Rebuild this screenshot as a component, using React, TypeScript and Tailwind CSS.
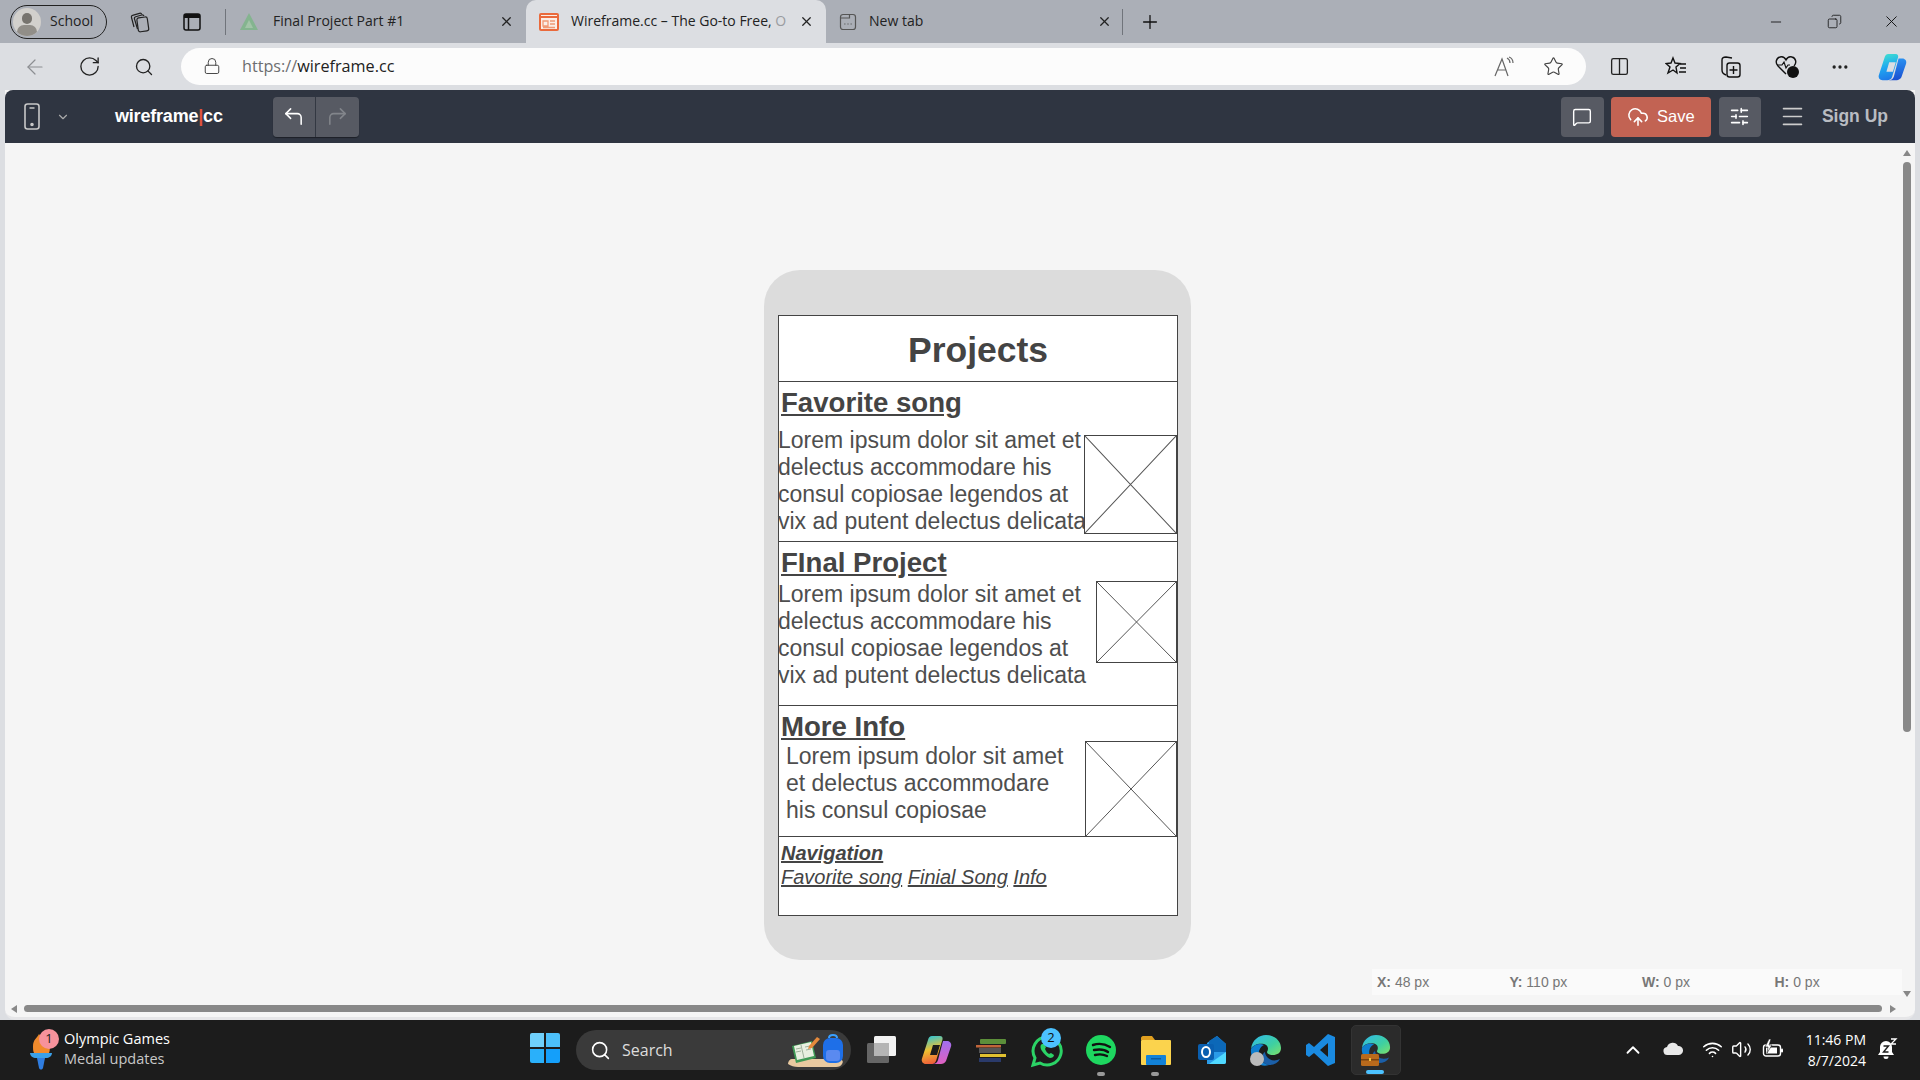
import React from "react";
import { ArrowLeft, RotateCw, Search, Lock, X, Plus, Minus, Star, Ellipsis, ChevronDown, ChevronUp, CornerUpLeft, CornerUpRight, MessageSquare, CloudUpload, SlidersHorizontal, Menu, Wifi, Volume2, Columns2, Copy } from "lucide-react";

const sans = "font-['Liberation_Sans',Arial,sans-serif]";
const ui = "font-['Open_Sans','Noto_Sans',sans-serif]";

function Tab({ active, title, icon, width, pr, gap, fade }: { active?: boolean; title: string; icon: React.ReactNode; width: string; pr: string; gap: string; fade?: string }) {
  return (
    <div className={`${width} ${pr} h-[43px] flex items-center pl-[13px] shrink-0 ${active ? "bg-[#dcdee2] rounded-t-[10px]" : ""}`}>
      <div className="w-[24px] h-[20px] flex items-center shrink-0">{icon}</div>
      <div className={`${gap} flex-1 pb-[2px] whitespace-pre text-[14px] text-[#222]`}>{title}{fade && <span className="text-[#9a9ca0]">{fade}</span>}</div>
      <X size={15} strokeWidth={2} className="text-[#222] shrink-0" />
    </div>
  );
}

function Cross({ className }: { className: string }) {
  return (
    <div className={`${className} border border-[#444] shrink-0 bg-white`}>
      <svg viewBox="0 0 100 100" preserveAspectRatio="none" className="w-full h-full block">
        <path d="M0 0L100 100M100 0L0 100" stroke="#555" strokeWidth="1" vectorEffect="non-scaling-stroke" fill="none" />
      </svg>
    </div>
  );
}

function Body({ children, className = "" }: { children: React.ReactNode; className?: string }) {
  return <div className={`w-[290px] text-[23px] leading-[27px] text-[#4e4e4e] whitespace-pre ${className}`}>{children}</div>;
}

function Heading({ children, className = "" }: { children: React.ReactNode; className?: string }) {
  return <div className={`text-[27.6px] leading-[34px] font-bold underline text-[#444] pl-[2px] ${className}`}>{children}</div>;
}

function Toolbar() {
  return (
    <div className="h-[53px] shrink-0 bg-[#2f3541] rounded-t-[8px] flex items-center pl-[19px] pr-[27px]">
      <svg width="16" height="27" viewBox="0 0 16 27" fill="none" stroke="#c8c8c8" strokeWidth="1.600">
        <rect x="1" y="1" width="14" height="25" rx="2.500" />
        <path d="M5.500 5h5" />
        <circle cx="8" cy="21.500" r="1" fill="#c8c8c8" />
      </svg>
      <ChevronDown size={14} className="text-[#aaa] ml-[16px]" />
      <div className={`${sans} ml-[45px] text-[18px] font-bold text-white tracking-[-0.2px]`}>wireframe<span className="text-[#e0533d]">|</span>cc</div>
      <div className="ml-[50px] flex h-[40px] rounded-[4px] overflow-hidden shadow-[0_1px_1px_rgba(0,0,0,0.4)]">
        <div className="w-[43px] bg-[#575a63] flex items-center justify-center border-r border-[#333842]"><CornerUpLeft size={23} strokeWidth={1.6} className="text-white" /></div>
        <div className="w-[43px] bg-[#575a63] flex items-center justify-center"><CornerUpRight size={23} strokeWidth={1.6} className="text-[#82858b]" /></div>
      </div>
      <div className="flex-1" />
      <div className="w-[43px] h-[40px] rounded-[4px] bg-[#575a63] flex items-center justify-center"><MessageSquare size={20} strokeWidth={1.7} className="text-white" /></div>
      <div className={`${sans} ml-[7px] w-[100px] h-[40px] rounded-[4px] bg-[#c26353] flex items-center justify-center gap-[8px] text-white text-[16.5px]`}><CloudUpload size={22} strokeWidth={1.7} />Save</div>
      <div className="ml-[8px] w-[42px] h-[40px] rounded-[4px] bg-[#575a63] flex items-center justify-center"><SlidersHorizontal size={21} strokeWidth={1.8} className="text-white" /></div>
      <Menu size={27} strokeWidth={1.4} className="text-[#ccc] ml-[18px]" />
      <div className={`${sans} ml-[16px] text-[17.5px] font-bold text-[#b9bcc2]`}>Sign Up</div>
    </div>
  );
}

function Wireframe() {
  return (
    <div className={`${sans} w-[427px] h-[690px] rounded-[36px] bg-[#dcdcdc] pt-[45px] px-[14px]`}>
      <div className="w-[400px] h-[601px] border border-[#444] bg-white flex flex-col">
        <div className="h-[66px] shrink-0 border-b border-[#444] flex items-center justify-center pt-[5px] text-[35.5px] font-bold text-[#444]">Projects</div>
        <div className="h-[160px] shrink-0 border-b border-[#444] flex flex-col pt-[4px]">
          <Heading>Favorite song</Heading>
          <div className="flex justify-between mt-[5px]">
            <Body className="mt-[2px] -ml-[1px]">{"Lorem ipsum dolor sit amet et\ndelectus accommodare his\nconsul copiosae legendos at\nvix ad putent delectus delicata"}</Body>
            <Cross className="w-[93px] h-[99px] mt-[10px]" />
          </div>
        </div>
        <div className="h-[164px] shrink-0 border-b border-[#444] flex flex-col pt-[4px]">
          <Heading>FInal Project</Heading>
          <div className="flex justify-between">
            <Body className="mt-[1px] -ml-[1px]">{"Lorem ipsum dolor sit amet et\ndelectus accommodare his\nconsul copiosae legendos at\nvix ad putent delectus delicata"}</Body>
            <Cross className="w-[81px] h-[82px] mt-[1px]" />
          </div>
        </div>
        <div className="h-[131px] shrink-0 border-b border-[#444] flex flex-col pt-[4px]">
          <Heading>More Info</Heading>
          <div className="flex justify-between">
            <Body className="pl-[7px] -mt-[1px]">{"Lorem ipsum dolor sit amet\net delectus accommodare\nhis consul copiosae"}</Body>
            <Cross className="w-[92px] h-[96px] -mt-[3px]" />
          </div>
        </div>
        <div className="flex-1 pl-[2px] pt-[4px] text-[#444] italic">
          <div className="text-[20px] leading-[24px] font-bold underline">Navigation</div>
          <div className="text-[20px] leading-[24px] whitespace-pre"><span className="underline">Favorite song</span> <span className="underline">Finial Song</span> <span className="underline">Info</span></div>
        </div>
      </div>
    </div>
  );
}

function Status() {
  return (
    <div className={`${sans} absolute right-[13px] bottom-[22px] w-[530px] h-[26px] bg-[#fafafa] flex items-center text-[14px] text-[#777]`}>
      <div className="w-[132.5px] pl-[5px]"><b>X:</b> 48 px</div>
      <div className="w-[132.5px] pl-[5px]"><b>Y:</b> 110 px</div>
      <div className="w-[132.5px] pl-[5px]"><b>W:</b> 0 px</div>
      <div className="pl-[5px]"><b>H:</b> 0 px</div>
    </div>
  );
}

function Edge({ size = 30, id }: { size?: number; id: string }) {
  return (
    <svg width={size} height={size} viewBox="0 0 32 32">
      <defs>
        <linearGradient id={id} x1="0" y1="0" x2="1" y2="1"><stop offset="0" stopColor="#2fb8ee" /><stop offset="0.6" stopColor="#3fd0a0" /><stop offset="1" stopColor="#7ee06a" /></linearGradient>
      </defs>
      <path d="M1 15C2 6 9 1 16 1c9 0 15 6 15 13 0 5-4 7-8 7-3 0-6-1-6-3 2-3 1-7-3-8-6-1-11 1-13 5z" fill={`url(#${id})`} />
      <path d="M1 15c3-5 9-6 13-4-4 2-6 6-5 11 1 4 5 8 10 9-3 1-6 1-8 0C5 29 0 22 1 15z" fill="#0f7fd0" />
      <path d="M19 31c5 0 9-2 11-6-4 2-9 2-12-1-2-2-3-4-3-6-2 1-4 5-2 9 1 2 3 4 6 4z" fill="#1b5fa8" />
    </svg>
  );
}

function Copilot({ id, w, h, rainbow }: { id: string; w: number; h: number; rainbow?: boolean }) {
  return (
    <svg width={w} height={h} viewBox="0 0 32 32">
      <defs>
        <linearGradient id={id} x1="0.3" y1="0" x2="0.5" y2="1">
          <stop offset="0" stopColor={rainbow ? "#2ec4d6" : "#3fe0d0"} />
          <stop offset="0.5" stopColor={rainbow ? "#f0c030" : "#1fa8f0"} />
          <stop offset="1" stopColor={rainbow ? "#ef5a3a" : "#1f78e8"} />
        </linearGradient>
        <linearGradient id={`${id}b`} x1="0.5" y1="0" x2="0.5" y2="1">
          <stop offset="0" stopColor={rainbow ? "#a070f0" : "#2a90f0"} />
          <stop offset="1" stopColor={rainbow ? "#e060c0" : "#1a4fd0"} />
        </linearGradient>
      </defs>
      <path d="M12 2h8c2 0 3 1.500 2.500 3.500L16 27c-1 2.500-3 3-5 3H6c-3 0-5-2.500-4-5.500L8 6c.6-2.500 2-4 4-4z" fill={`url(#${id})`} />
      <path d="M23 7h4c3 0 5 2.500 4 5.500L26 27c-1 2-3 3-5 3h-9c3 0 5-1 6-4z" fill={`url(#${id}b)`} />
      <path d="M13 11h7l-3 10h-7z" fill={rainbow ? "#1c1c1c" : "#dcdee2"} />
    </svg>
  );
}

function Taskbar() {
  return (
    <div className={`${ui} h-[60px] shrink-0 bg-[#1c1c1c] relative text-white`}>
      <div className="absolute left-[29px] top-[6px] w-[44px] h-[48px]">
        <svg width="24" height="44" viewBox="0 0 24 44" className="absolute left-0 top-[4px]">
          <path d="M10 4c-2 4-6 6-6 12 0 3 0 5 1 7h15c2-4 0-8-2-11-1 2-2 3-3 3 0-4-2-8-5-11z" fill="#f08a2c" />
          <path d="M1 23h22c0 3-3 5-6 5H7c-3 0-6-2-6-5z" fill="#3aa0e8" />
          <path d="M8 28h8l-2 10c-1 2-3 2-4 0z" fill="#2f7de0" />
        </svg>
        <div className="absolute left-[10px] top-[3px] w-[20px] h-[20px] rounded-full bg-[#f7929c] text-[#222] text-[13px] flex items-center justify-center">1</div>
      </div>
      <div className="absolute left-[64px] top-[9px] text-[14.5px] leading-[20px]">
        <div>Olympic Games</div>
        <div className="text-[#c8c8c8]">Medal updates</div>
      </div>
      <div className="absolute left-[530px] top-[13px] w-[30px] h-[30px] grid grid-cols-2 gap-[1.5px] rounded-[2px] overflow-hidden">
        <div className="bg-[#6fd0fb]" /><div className="bg-[#4cc0fa]" /><div className="bg-[#2ab0fa]" /><div className="bg-[#149ffa]" />
      </div>
      <div className="absolute left-[576px] top-[10px] w-[275px] h-[40px] rounded-[20px] bg-[#3a3a3a] flex items-center pl-[14px] text-[#ddd] text-[16px]">
        <Search size={21} strokeWidth={1.8} className="text-white" />
        <span className="ml-[11px]">Search</span>
        <svg width="62" height="36" viewBox="0 0 62 36" className="absolute right-[3px] top-[2px]">
          <path d="M6 27h46c4 0 6 2 4 5-1 2-3 3-6 3H12c-4 0-7-1-10-3 0-3 2-5 4-5z" fill="#e8c9a0" />
          <path d="M6 14l20-5 4 17-20 5z" fill="#3f9a55" />
          <path d="M8 14l17-4 3 14-17 4z" fill="#e8efe0" />
          <path d="M15 13l3 13M10 17l5-1M10 20l5-1M19 15l5-1M20 18l5-1" stroke="#8aa088" strokeWidth="0.800" />
          <path d="M23 14l8-9 3 2-8 9-4 1z" fill="#e58a3c" />
          <rect x="37" y="6" width="20" height="25" rx="7" fill="#1e6fe8" />
          <rect x="40" y="18" width="14" height="11" rx="3" fill="#5a8af0" />
          <path d="M43 6c0-4 8-4 8 0" fill="none" stroke="#3aa0ff" strokeWidth="2" />
        </svg>
      </div>
      <div className="absolute left-[865px] top-0 h-[60px] w-[460px]">
        <svg width="32" height="32" viewBox="0 0 32 32" className="absolute left-0 top-[14px]">
          <rect x="9" y="2" width="22" height="20" rx="1.500" fill="#f2f2f2" />
          <rect x="2" y="9" width="22" height="20" rx="1.500" fill="#666" />
          <rect x="9" y="9" width="15" height="13" fill="#b5b5b5" />
        </svg>
        <div className="absolute left-[55px] top-[14px]"><Copilot id="cp1" w={32} h={32} rainbow /></div>
        <svg width="32" height="28" viewBox="0 0 32 28" className="absolute left-[110px] top-[16px]">
          <rect x="5" y="3" width="26" height="5" rx="1" fill="#5c8f3a" />
          <rect x="1" y="9" width="25" height="2.500" fill="#c0653a" />
          <rect x="4" y="12" width="22" height="5" fill="#555" />
          <rect x="5" y="18" width="26" height="3" fill="#e0c030" />
          <rect x="4" y="22" width="22" height="4" fill="#2a3a6a" />
        </svg>
        <svg width="34" height="34" viewBox="0 0 34 34" className="absolute left-[165px] top-[14px]">
          <path d="M17 3a14 14 0 0 0-12 21L3 31l7-2A14 14 0 1 0 17 3z" fill="none" stroke="#2bd366" strokeWidth="3" />
          <path d="M12 10c-2 1-2 4 0 7s5 6 8 7c2 0 4-1 4-3l-3-2-2 1c-2-1-3-3-4-5l1-2-2-3z" fill="#2bd366" />
        </svg>
        <div className="absolute left-[176px] top-[8px] w-[20px] h-[20px] rounded-full bg-[#4cc2ff] text-[#111] text-[13px] flex items-center justify-center">2</div>
        <svg width="30" height="30" viewBox="0 0 30 30" className="absolute left-[221px] top-[15px]">
          <circle cx="15" cy="15" r="15" fill="#1ed760" />
          <path d="M7 10c6-2 12-1 17 2M8 15c5-1 10-1 14 2M9 20c4-1 8-1 12 1" stroke="#111" strokeWidth="2.400" strokeLinecap="round" fill="none" />
        </svg>
        <div className="absolute left-[232px] top-[52px] w-[8px] h-[4px] rounded-full bg-[#999]" />
        <svg width="32" height="30" viewBox="0 0 32 30" className="absolute left-[275px] top-[15px]">
          <path d="M1 3c0-1 1-2 2-2h9l3 4H1z" fill="#e0a020" />
          <rect x="1" y="5" width="30" height="25" rx="1" fill="#fbd34d" />
          <rect x="6" y="20" width="20" height="10" rx="1" fill="#1282d8" />
          <rect x="11" y="23" width="10" height="1.500" fill="#0a5aa0" />
        </svg>
        <div className="absolute left-[286px] top-[52px] w-[8px] h-[4px] rounded-full bg-[#999]" />
        <svg width="30" height="30" viewBox="0 0 30 30" className="absolute left-[332px] top-[15px]">
          <path d="M10 8L20 1l9 8v18a2 2 0 0 1-2 2H10z" fill="#2a9be8" />
          <path d="M20 1l9 8v8H12V6z" fill="#0c68b8" />
          <path d="M12 29l17-12v10a2 2 0 0 1-2 2z" fill="#50d9ff" />
          <rect x="1" y="9" width="16" height="16" rx="2" fill="#0a5fb0" />
          <ellipse cx="9" cy="17" rx="4" ry="5" fill="none" stroke="#fff" strokeWidth="2" />
        </svg>
      </div>
      <div className="absolute left-[1250px] top-[14px]"><Edge size={32} id="eg1" /></div>
      <div className="absolute left-[1250px] top-[32px] w-[14px] h-[14px] rounded-full bg-[#bbb]" />
      <svg width="30" height="32" viewBox="0 0 30 32" className="absolute left-[1306px] top-[14px]">
        <path d="M22 0l7 3v26l-7 3L8 19l-5 4-3-2v-10l3-2 5 4zM22 9l-8 7 8 7z" fill="#1a8ae0" fillRule="evenodd" />
      </svg>
      <div className="absolute left-[1351px] top-[5px] w-[50px] h-[50px] rounded-[5px] bg-[#2b2b2b] border border-[#333] flex items-start justify-center pt-[8px]">
        <Edge size={30} id="eg2" />
        <svg width="18" height="13" viewBox="0 0 18 13" className="absolute left-[9px] top-[27px]">
          <rect x="0" y="1" width="18" height="12" rx="1.500" fill="#b96a1c" />
          <rect x="0" y="6" width="18" height="1.500" fill="#7a4310" />
          <rect x="8" y="5" width="2" height="3" fill="#f0c040" />
        </svg>
      </div>
      <div className="absolute left-[1366px] top-[50px] w-[18px] h-[4px] rounded-full bg-[#4cc2ff]" />

      <ChevronUp size={22} strokeWidth={2} className="absolute left-[1622px] top-[19px] text-white" />
      <svg width="20" height="14" viewBox="0 0 20 14" className="absolute left-[1663px] top-[22px]">
        <path d="M5 13a4 4 0 0 1-1-8 6 6 0 0 1 11-1 4.500 4.500 0 0 1 1 9z" fill="#e8e8e8" />
      </svg>
      <Wifi size={21} strokeWidth={1.8} className="absolute left-[1702px] top-[19px] text-white" />
      <Volume2 size={21} strokeWidth={1.6} className="absolute left-[1731px] top-[19px] text-white" />
      <svg width="22" height="22" viewBox="0 0 22 22" className="absolute left-[1762px] top-[18px]">
        <rect x="1.500" y="7" width="17" height="11" rx="2.500" fill="none" stroke="#fff" strokeWidth="1.400" />
        <rect x="19" y="10.500" width="2" height="4" rx="1" fill="#fff" />
        <rect x="4" y="9.500" width="11" height="6" fill="#fff" />
        <path d="M7 1L3 9h3l-1 6 5-8H7l2-6z" fill="#fff" stroke="#1c1c1c" strokeWidth="0.600" />
      </svg>
      <div className="absolute right-[54px] top-[9px] text-[14px] leading-[21px] text-right whitespace-nowrap">
        <div>11:46 PM</div>
        <div>8/7/2024</div>
      </div>
      <svg width="22" height="24" viewBox="0 0 22 24" className="absolute left-[1876px] top-[18px]">
        <path d="M10 3a6 6 0 0 0-6 6v5l-2 3h16l-2-3V9a6 6 0 0 0-6-6z" fill="#fff" />
        <path d="M7.500 18.500a2.500 2.500 0 0 0 5 0z" fill="#fff" />
        <path d="M7.500 8h5l-5 6h5" fill="none" stroke="#1c1c1c" strokeWidth="1.400" />
        <path d="M15 1h5l-5 5h5" fill="none" stroke="#fff" strokeWidth="1.300" />
      </svg>
    </div>
  );
}

export default function App() {
  return (
    <div className={`${ui} w-[1920px] h-[1080px] overflow-hidden flex flex-col bg-[#dcdee2]`}>
      {/* tab strip */}
      <div className="h-[43px] shrink-0 bg-[#abafb7] flex items-stretch">
        <div className="flex items-center pl-[10px] w-[226px] shrink-0">
          <div className="h-[34px] w-[97px] shrink-0 rounded-full border border-[#222] flex items-center pl-[2px] text-[14px] text-[#222]">
            <div className="w-[28px] h-[28px] rounded-full bg-[#d2d0cc] overflow-hidden relative shrink-0">
              <div className="absolute left-[9px] top-[5px] w-[10px] h-[11px] rounded-full bg-[#77746e]" />
              <div className="absolute left-[4px] top-[17px] w-[20px] h-[14px] rounded-full bg-[#918e88]" />
            </div>
            <span className="ml-[9px] pb-[2px]">School</span>
          </div>
          <svg width="22" height="22" viewBox="0 0 22 22" fill="none" stroke="#222" strokeWidth="1.200" className="ml-[22px] shrink-0">
            <path d="M5 16L2.500 6.500c-.3-1 .2-2 1-2.200l7-2c1-.2 2 .2 2.200 1" />
            <path d="M8.500 18L5.500 8c-.3-1 .2-2 1.200-2.300l6-1.700c1-.3 2 .2 2.300 1" />
            <rect x="8.500" y="6.500" width="10.500" height="14" rx="2" transform="rotate(-8 13 13)" />
          </svg>
          <svg width="20" height="20" viewBox="0 0 20 20" className="ml-[31px] shrink-0"><rect x="2" y="2" width="16" height="16" rx="2" fill="none" stroke="#111" strokeWidth="1.500" /><path d="M2 4a2 2 0 0 1 2-2h12a2 2 0 0 1 2 2v2H2z" fill="#111" /><path d="M6.500 6v12" stroke="#111" strokeWidth="1.500" /></svg>
        </div>
        <div className="w-px h-[26px] bg-[#70747b] self-center -ml-[1px]" />
        <Tab width="w-[300px]" pr="pr-[12px]" gap="ml-[10px]" title="Final Project Part #1" icon={<svg width="20" height="20" viewBox="0 0 20 20"><path d="M10 1L19 18H1z" fill="#84b48f" /><path d="M10 8l4 8H6z" fill="#a2c4a8" /></svg>} />
        <Tab active width="w-[300px]" pr="pr-[12px]" gap="ml-[8px]" title="Wireframe.cc – The Go-to Free, " fade="O" icon={<svg width="20" height="20" viewBox="0 0 20 20"><rect x="1" y="2" width="18" height="16" rx="1" fill="#fbeee6" stroke="#ea6a3c" strokeWidth="2" /><path d="M1 5h18" stroke="#ea6a3c" strokeWidth="2" /><path d="M4 9h5v5H4zM11 9h5M11 12h5M4 15.500h12" stroke="#f09a76" strokeWidth="1.300" fill="none" /></svg>} />
        <Tab width="w-[296px]" pr="pr-[10px]" gap="ml-[6px]" title="New tab" icon={<svg width="18" height="18" viewBox="0 0 18 18"><rect x="1.500" y="1.500" width="15" height="15" rx="2.500" fill="none" stroke="#555" strokeWidth="1.200" /><path d="M1.500 5h9V1.500" fill="none" stroke="#555" strokeWidth="1.200" /><path d="M5.500 11h.8M8.600 11h.8M11.700 11h.8" stroke="#555" strokeWidth="1.300" /></svg>} />
        <div className="w-px h-[26px] bg-[#70747b] self-center" />
        <Plus size={22} strokeWidth={1.4} className="text-[#111] self-center ml-[16px]" />
        <div className="flex-1" />
        <div className="flex items-center pr-[19px] text-[#111]">
          <Minus size={16} strokeWidth={1.3} />
          <Copy size={15} strokeWidth={1.3} className="-scale-x-100 ml-[43px]" />
          <X size={19} strokeWidth={1.2} className="ml-[40px]" />
        </div>
      </div>
      {/* address bar */}
      <div className="h-[47px] shrink-0 bg-[#dcdee2] flex items-center text-[#222]">
        <ArrowLeft size={24} strokeWidth={1.2} className="ml-[23px] text-[#8c8e92]" />
        <RotateCw size={23} strokeWidth={1.4} className="ml-[31px]" />
        <Search size={20} strokeWidth={1.6} className="ml-[33px]" />
        <div className="ml-[27px] w-[1405px] h-[37px] mb-[1px] rounded-full bg-[#fcfcfc] flex items-center relative shrink-0">
          <Lock size={18} strokeWidth={1.3} className="ml-[22px] text-[#444]" />
          <div className="ml-[21px] text-[16.2px] text-[#222]"><span className="text-[#6d6e70]">https://</span>wireframe.cc</div>
          <svg width="22" height="22" viewBox="0 0 22 22" className="absolute right-[71px] top-[8px]"><path d="M2 20L9 3l6 17M4.500 14h9" fill="none" stroke="#666" strokeWidth="1.200" /><path d="M14 2c2 1 3 3 3 5M16 1c3 1 4 4 4 6" fill="none" stroke="#666" strokeWidth="1.200" /></svg>
          <Star size={21} strokeWidth={1.3} className="absolute right-[22px] top-[8px] text-[#444]" />
        </div>
        <Columns2 size={21} strokeWidth={1.5} className="ml-[23px]" />
        <svg width="22" height="22" viewBox="0 0 22 22" className="ml-[35px]"><path d="M8 2l2 5 5 .5-4 3.500 1 6-4-3-5 3 2-6-4-3.500 5-.5z" fill="none" stroke="#111" strokeWidth="1.400" /><path d="M15 8h6M15 12h6M14 16h7" stroke="#111" strokeWidth="1.300" /></svg>
        <svg width="22" height="24" viewBox="0 0 22 24" className="ml-[33px]"><path d="M6 20C3 19 2 17 2 15V5c0-2 2-3 4-3l6 1" fill="none" stroke="#111" strokeWidth="1.400" /><rect x="7" y="8" width="13" height="14" rx="2.500" fill="none" stroke="#111" strokeWidth="1.400" /><path d="M13.500 11v8M9.500 15h8" stroke="#111" strokeWidth="1.400" /></svg>
        <div className="ml-[33px] relative w-[24px] h-[24px]">
          <svg width="22" height="20" viewBox="0 0 22 20" className="absolute left-0 top-0"><path d="M11 19L3 11C0 8 1 3 5 2c3-1 5 1 6 3 1-2 3-4 6-3 4 1 5 6 2 9" fill="none" stroke="#111" strokeWidth="1.400" /><path d="M2 10h5l2-3 2 6 2-3h2" fill="none" stroke="#111" strokeWidth="1.200" /></svg>
          <div className="absolute left-[12px] top-[11px] w-[12px] h-[12px] rounded-full bg-[#111]" />
        </div>
        <Ellipsis size={20} strokeWidth={2} className="ml-[31px]" />
        <div className="ml-[27px]"><Copilot id="cp2" w={30} h={30} /></div>
      </div>
      {/* page */}
      <div className="flex-1 min-h-0 mx-[5px] flex flex-col rounded-b-[10px] bg-[#f5f5f5] border-b-[3px] border-[#e6e6e8] relative overflow-hidden">
        <Toolbar />
        <div className="flex-1 flex min-h-0">
          <div className="flex-1 pt-[127px] pl-[759px] min-w-0"><Wireframe /></div>
          <div className="w-[16px] shrink-0 flex flex-col items-center relative">
            <div className="mt-[7px] w-0 h-0 border-l-[4px] border-r-[4px] border-b-[6px] border-transparent border-b-[#888]" />
            <div className="mt-[6px] w-[8px] h-[570px] rounded-full bg-[#888]" />
            <div className="absolute bottom-[20px] w-0 h-0 border-l-[4px] border-r-[4px] border-t-[6px] border-transparent border-t-[#888]" />
          </div>
        </div>
        <div className="absolute left-[6px] right-[19px] bottom-[5px] h-[7px] flex items-center">
          <div className="w-0 h-0 border-t-[4px] border-b-[4px] border-r-[6px] border-transparent border-r-[#888]" />
          <div className="ml-[7px] flex-1 h-[7px] rounded-full bg-[#888]" />
          <div className="ml-[8px] w-0 h-0 border-t-[4px] border-b-[4px] border-l-[6px] border-transparent border-l-[#888]" />
        </div>
        <Status />
      </div>
      <Taskbar />
    </div>
  );
}
